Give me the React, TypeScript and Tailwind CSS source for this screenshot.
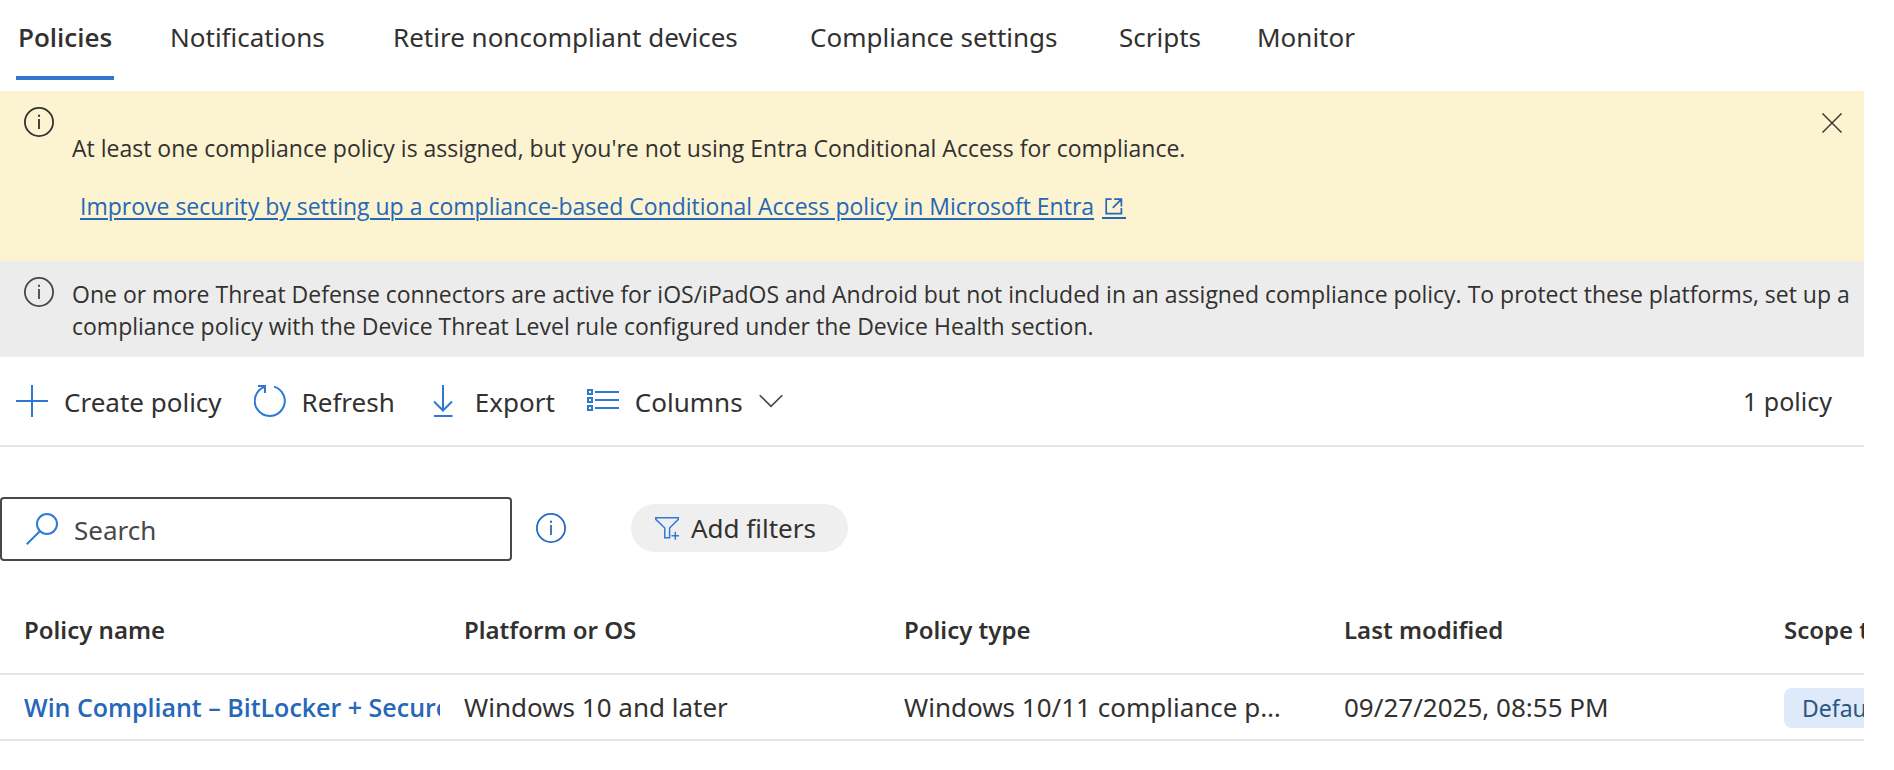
import type { ReactNode } from "react";

const tabs = [
  "Policies",
  "Notifications",
  "Retire noncompliant devices",
  "Compliance settings",
  "Scripts",
  "Monitor",
];

const columns = ["Policy name", "Platform or OS", "Policy type", "Last modified", "Scope tags"];

const policies = [
  {
    name: "Win Compliant – BitLocker + Secure Boot",
    platform: "Windows 10 and later",
    type: "Windows 10/11 compliance policy",
    modified: "09/27/2025, 08:55 PM",
    scope: "Default",
  },
];

function InfoIcon({ className }: { className: string }) {
  return (
    <svg viewBox="0 0 30 30" className={`size-[30px] shrink-0 ${className}`} fill="none" aria-hidden="true">
      <circle cx="15" cy="15" r="14.1" stroke="currentColor" strokeWidth="1.8" />
      <path d="M15 12v10" stroke="currentColor" strokeWidth="1.8" />
      <path d="M15 7.8v2" stroke="currentColor" strokeWidth="2" />
    </svg>
  );
}

function CommandIcon({ children }: { children: ReactNode }) {
  return (
    <svg
      viewBox="0 0 32 32"
      className="size-8 shrink-0 text-[#2f78d2]"
      fill="none"
      stroke="currentColor"
      strokeWidth="2"
      aria-hidden="true"
    >
      {children}
    </svg>
  );
}

function Command({ label, icon, menu }: { label: string; icon: ReactNode; menu?: boolean }) {
  return (
    <button type="button" className="flex items-center gap-4">
      <CommandIcon>{icon}</CommandIcon>
      <span className="pt-0.5">{label}</span>
      {menu && (
        <svg viewBox="0 0 24 24" className="size-6" fill="none" stroke="#484644" strokeWidth="1.6" aria-hidden="true">
          <path d="M.7 6.2 12 17.4 23.3 6.2" />
        </svg>
      )}
    </button>
  );
}

function Tabs() {
  return (
    <nav className="grid grid-cols-[152px_223px_417px_309px_138px_auto] pb-[11px] pl-4">
      {tabs.map((tab, i) => (
        <div key={tab}>
          <button
            type="button"
            aria-current={i === 0 ? "page" : undefined}
            className={`whitespace-nowrap border-b-4 px-0.5 pt-[19px] pb-[21px] ${
              i === 0 ? "border-[#3476cd] font-['Open_Sans'] font-semibold" : "border-transparent"
            }`}
          >
            {tab}
          </button>
        </div>
      ))}
    </nav>
  );
}

function WarningBanner() {
  return (
    <section className="flex items-start bg-[#fcf3d0] py-4 pr-[22px] pl-6 font-['Open_Sans','Noto_Sans',sans-serif]">
      <InfoIcon className="text-[#323130]" />
      <div className="flex grow flex-col gap-[26px] pt-[25px] pb-[23px] pl-[18px] text-[23px] leading-8">
        <p>At least one compliance policy is assigned, but you're not using Entra Conditional Access for compliance.</p>
        <p className="pl-2">
          <a
            href="#conditional-access"
            className="inline-flex gap-2 text-[#2567b8] underline decoration-2 underline-offset-3"
          >
            <span>
              Improve security by setting up a compliance-based Conditional Access policy in Microsoft Entra
            </span>
            <svg
              viewBox="0 0 24 32"
              className="h-8 w-6"
              fill="none"
              stroke="currentColor"
              strokeWidth="1.7"
              aria-hidden="true"
            >
              <path d="M9.6 9.2H4.2v14.4h15.2v-5.6M19.4 16v-1.6M12.2 9.2h7.2v7.2M19.2 9.4l-8.4 8.4" />
              <path d="M0 28h24" strokeWidth="2" />
            </svg>
          </a>
        </p>
      </div>
      <button type="button" aria-label="Dismiss" className="pt-[6px]">
        <svg viewBox="0 0 20 20" className="size-5" fill="none" stroke="#323130" strokeWidth="1.4" aria-hidden="true">
          <path d="M.5.5l19 19M19.5.5l-19 19" />
        </svg>
      </button>
    </section>
  );
}

function ThreatBanner() {
  return (
    <section className="flex items-start bg-[#ececec] pt-4 pb-[15px] pl-6 font-['Open_Sans','Noto_Sans',sans-serif]">
      <InfoIcon className="text-[#484644]" />
      <p className="pt-px pl-[18px] text-[23px] leading-8">
        One or more Threat Defense connectors are active for iOS/iPadOS and Android but not included in an assigned
        compliance policy. To protect these platforms, set up a compliance policy with the Device Threat Level rule
        configured under the Device Health section.
      </p>
    </section>
  );
}

function Toolbar() {
  return (
    <div className="flex h-[90px] items-center justify-between border-b-2 border-[#e6e6e6] pr-8 pl-4">
      <div className="flex items-center gap-8">
        <Command label="Create policy" icon={<path d="M16 0v32M0 16h32" />} />
        <Command
          label="Refresh"
          icon={
            <>
              <path d="M20 1.6a15 15 0 1 1-9.4.3" />
              <path d="M4 1h7v7" />
            </>
          }
        />
        <Command label="Export" icon={<path d="M16 0v26M7 16.5l9 9 9-9M7 31h18.5" />} />
        <Command
          label="Columns"
          menu
          icon={<path d="M1 5h4v4H1zM1 13h4v4H1zM1 21h4v4H1zM8 7h24M8 15h24M8 23h24" />}
        />
      </div>
      <span className="text-[25px]">1 policy</span>
    </div>
  );
}

function Filters() {
  return (
    <div className="flex items-center pt-[50px]">
      <label className="flex h-16 w-[512px] items-center gap-4 rounded border-2 border-[#484848] pr-4 pl-6">
        <svg
          viewBox="0 0 32 32"
          className="size-8 shrink-0"
          fill="none"
          stroke="#2f7ad8"
          strokeWidth="2"
          aria-hidden="true"
        >
          <circle cx="21" cy="11" r="10" />
          <path d="M13.8 18.2.7 31.3" />
        </svg>
        <input
          type="text"
          aria-label="Search"
          placeholder="Search"
          className="w-full min-w-0 pt-0.5 outline-none placeholder:text-[#484848]"
        />
      </label>
      <div className="flex items-center pb-[3px]">
        <button type="button" aria-label="About search" className="ml-6">
          <InfoIcon className="text-[#256cc0]" />
        </button>
        <button
          type="button"
          className="ml-[65px] flex h-12 items-center gap-3 rounded-full bg-[#efefef] pr-8 pl-6"
        >
          <svg
            viewBox="0 0 24 24"
            className="size-6"
            fill="none"
            stroke="#2f7ad8"
            strokeWidth="1.5"
            aria-hidden="true"
          >
            <path d="M.8 1.8h22.6v1.6L14.6 12v9.8H9.8V12L.8 3.4zM20.3 15.8v8M16.4 19.8H24" />
          </svg>
          <span>Add filters</span>
        </button>
      </div>
    </div>
  );
}

function PolicyTable() {
  const cell = "h-[66px] border-b-2 border-[#e6e6e6] pl-6";
  return (
    <table className="mt-[26px] w-[2200px] table-fixed border-separate border-spacing-0 text-left">
      <thead>
        <tr>
          {columns.map((c) => (
            <th key={c} className="h-[88px] border-b-2 border-[#e6e6e6] pl-6 text-[24px] font-semibold">
              {c}
            </th>
          ))}
        </tr>
      </thead>
      <tbody>
        {policies.map((p) => (
          <tr key={p.name}>
            <td className={`${cell} overflow-hidden whitespace-nowrap`}>
              <a
                href="#policy"
                className="font-['Open_Sans','Noto_Sans',sans-serif] text-[25px] font-semibold text-[#2567b8]"
              >
                {p.name}
              </a>
            </td>
            <td className={`${cell} truncate pr-8`}>{p.platform}</td>
            <td className={`${cell} truncate pr-8`}>{p.type}</td>
            <td className={`${cell} truncate pr-8`}>{p.modified}</td>
            <td className={cell}>
              <span className="inline-flex h-10 items-center rounded-lg bg-[#deeaf9] px-[18px] align-middle text-[23px] text-[#2b5580]">
                {p.scope}
              </span>
            </td>
          </tr>
        ))}
      </tbody>
    </table>
  );
}

export default function App() {
  return (
    <main className="mr-[30px] overflow-hidden bg-white font-['Noto_Sans','Open_Sans',sans-serif] text-[26px] leading-9 text-[#323130]">
      <Tabs />
      <WarningBanner />
      <ThreatBanner />
      <Toolbar />
      <Filters />
      <PolicyTable />
    </main>
  );
}
